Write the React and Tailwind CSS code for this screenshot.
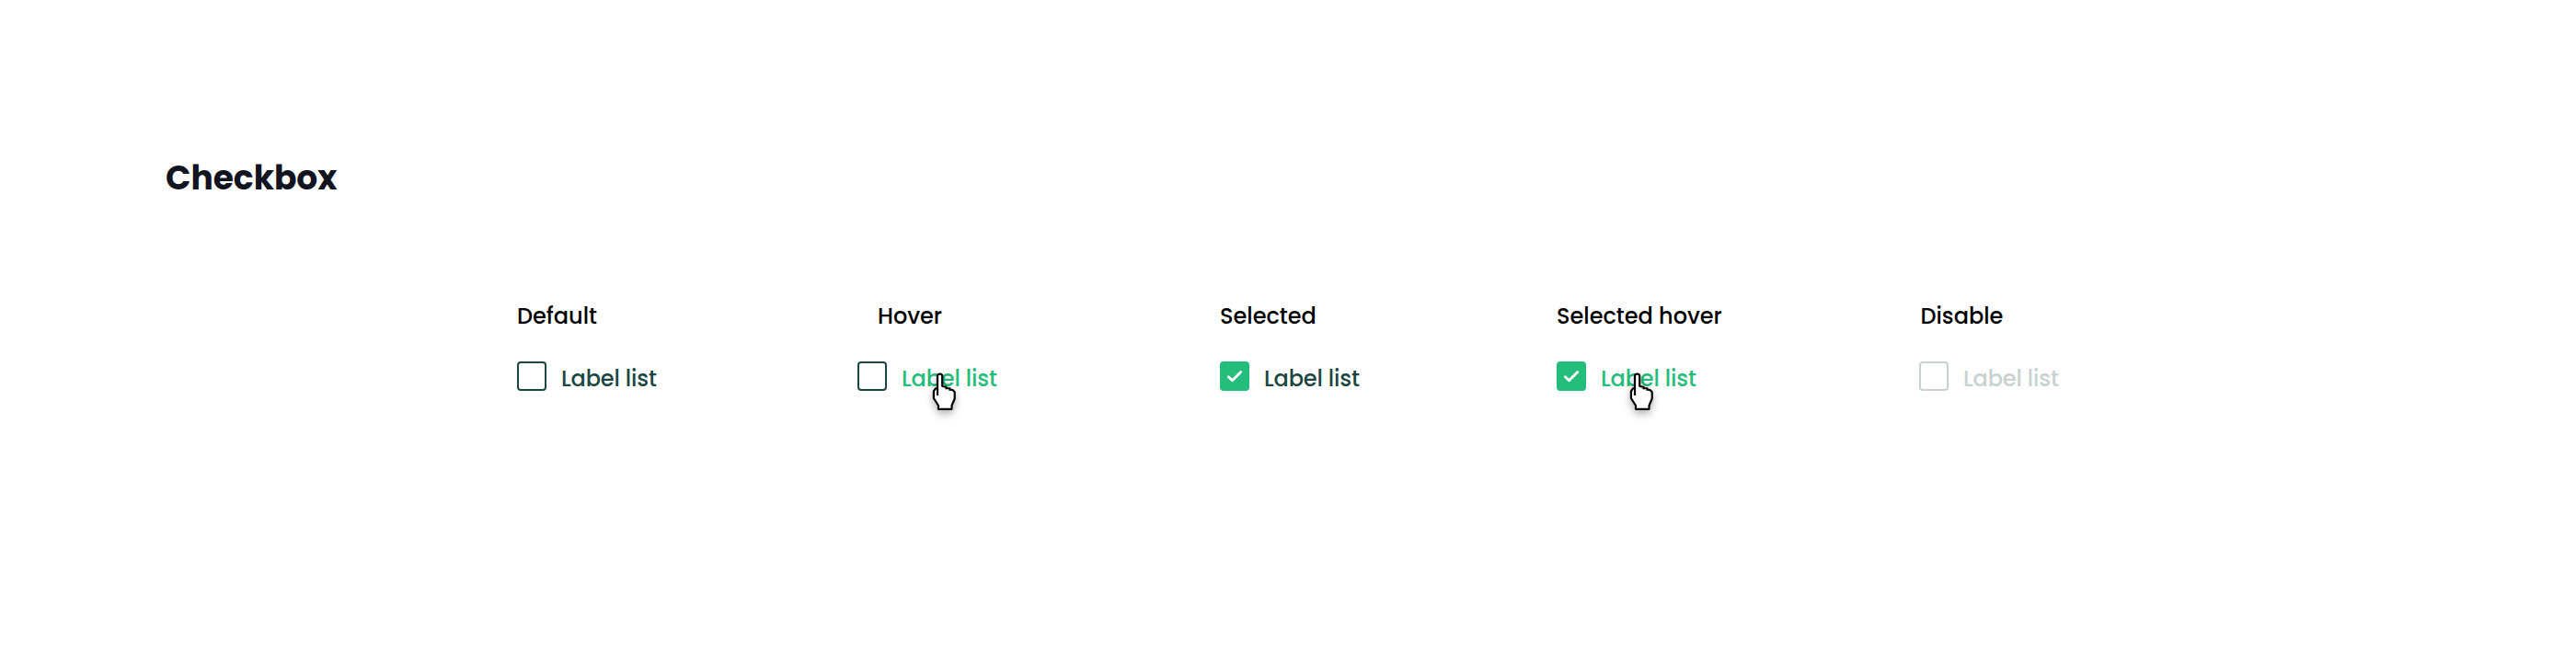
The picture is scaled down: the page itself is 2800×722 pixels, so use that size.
import React from 'react';

const columns = [
    { title: 'Default', width: 'w-[370px]', titleClass: 'pl-0', box: 'border-2 border-[#1c4642]', text: 'text-[#1c4642]' },
    { title: 'Hover', width: 'w-[394px]', titleClass: 'pl-[22px]', box: 'border-2 border-[#1c4642]', text: 'text-[#24bd7b]', cursor: 'left-[82px]' },
    { title: 'Selected', width: 'w-[366px]', titleClass: 'pl-0', box: 'bg-[#24bd7b]', text: 'text-[#1c4642]', checked: true },
    { title: 'Selected hover', width: 'w-[394px]', titleClass: 'pl-0', box: 'bg-[#24bd7b]', text: 'text-[#24bd7b]', checked: true, cursor: 'left-[80px]' },
    { title: 'Disable', width: 'w-[200px]', titleClass: 'pl-[1.5px]', box: 'border-2 border-[#c8d2d0]', text: 'text-[#c8d2d0]' },
];

const CheckIcon = () => (
    <svg width="32" height="32" viewBox="0 0 32 32" fill="none">
        <path d="M9.3 16.7L13.5 20.7L22.7 11.5" stroke="white" strokeWidth="2.9" strokeLinecap="round" strokeLinejoin="round" />
    </svg>
);

const HandCursor = ({ className }) => (
    <svg
        className={`absolute top-[12px] overflow-visible drop-shadow-[0_4px_4px_rgba(0,0,0,0.3)] ${className}`}
        width="26"
        height="42"
        viewBox="0 0 26 42"
    >
        <path
            d="M5 25V4C5 .8 10.2 .8 10.2 4V15L14.5 15.8V17L18.5 17.3V18.8L21.5 19L23.7 21.3V28.5L20.5 36V39.8H6V36L.9 28V20.3L2.8 17.5L5 17"
            fill="white"
        />
        <path
            d="M5 25V4C5 .8 10.2 .8 10.2 4V15.5M10.2 15L14.5 15.8V18.3M14.5 17L18.5 17.3V19.8M18.5 18.6L21.5 19L23.7 21.3V28.5L20.5 36V39.8H6V36L.9 28V20.3L2.8 17.5L5 17"
            fill="none"
            stroke="black"
            strokeWidth="2.2"
            strokeLinejoin="round"
        />
    </svg>
);

const CheckboxColumn = ({ title, width, titleClass, box, text, checked, cursor }) => (
    <div className={`shrink-0 ${width}`}>
        <h2 className={`h-9 text-2xl leading-9 whitespace-nowrap font-medium text-black ${titleClass}`}>{title}</h2>
        <div className="relative mt-[31px] flex h-8 items-start">
            <span className={`h-8 w-8 shrink-0 rounded-[4px] ${box}`}>{checked && <CheckIcon />}</span>
            <span className={`mt-[1px] ml-4 text-2xl leading-9 tracking-[-0.12px] whitespace-nowrap font-medium ${text}`}>Label list</span>
            {cursor && <HandCursor className={cursor} />}
        </div>
    </div>
);

const App = () => {
    return (
        <main className="h-[722px] w-[2800px] overflow-hidden bg-white pt-[167px] font-['Poppins','Inter',sans-serif]">
            <h1 className="ml-[180px] h-[54px] text-[36px] leading-[54px] font-bold text-[#12141f]">Checkbox</h1>
            <section className="mt-[105px] ml-[562px] flex">
                {columns.map((column) => (
                    <CheckboxColumn key={column.title} {...column} />
                ))}
            </section>
        </main>
    );
};

export default App;
